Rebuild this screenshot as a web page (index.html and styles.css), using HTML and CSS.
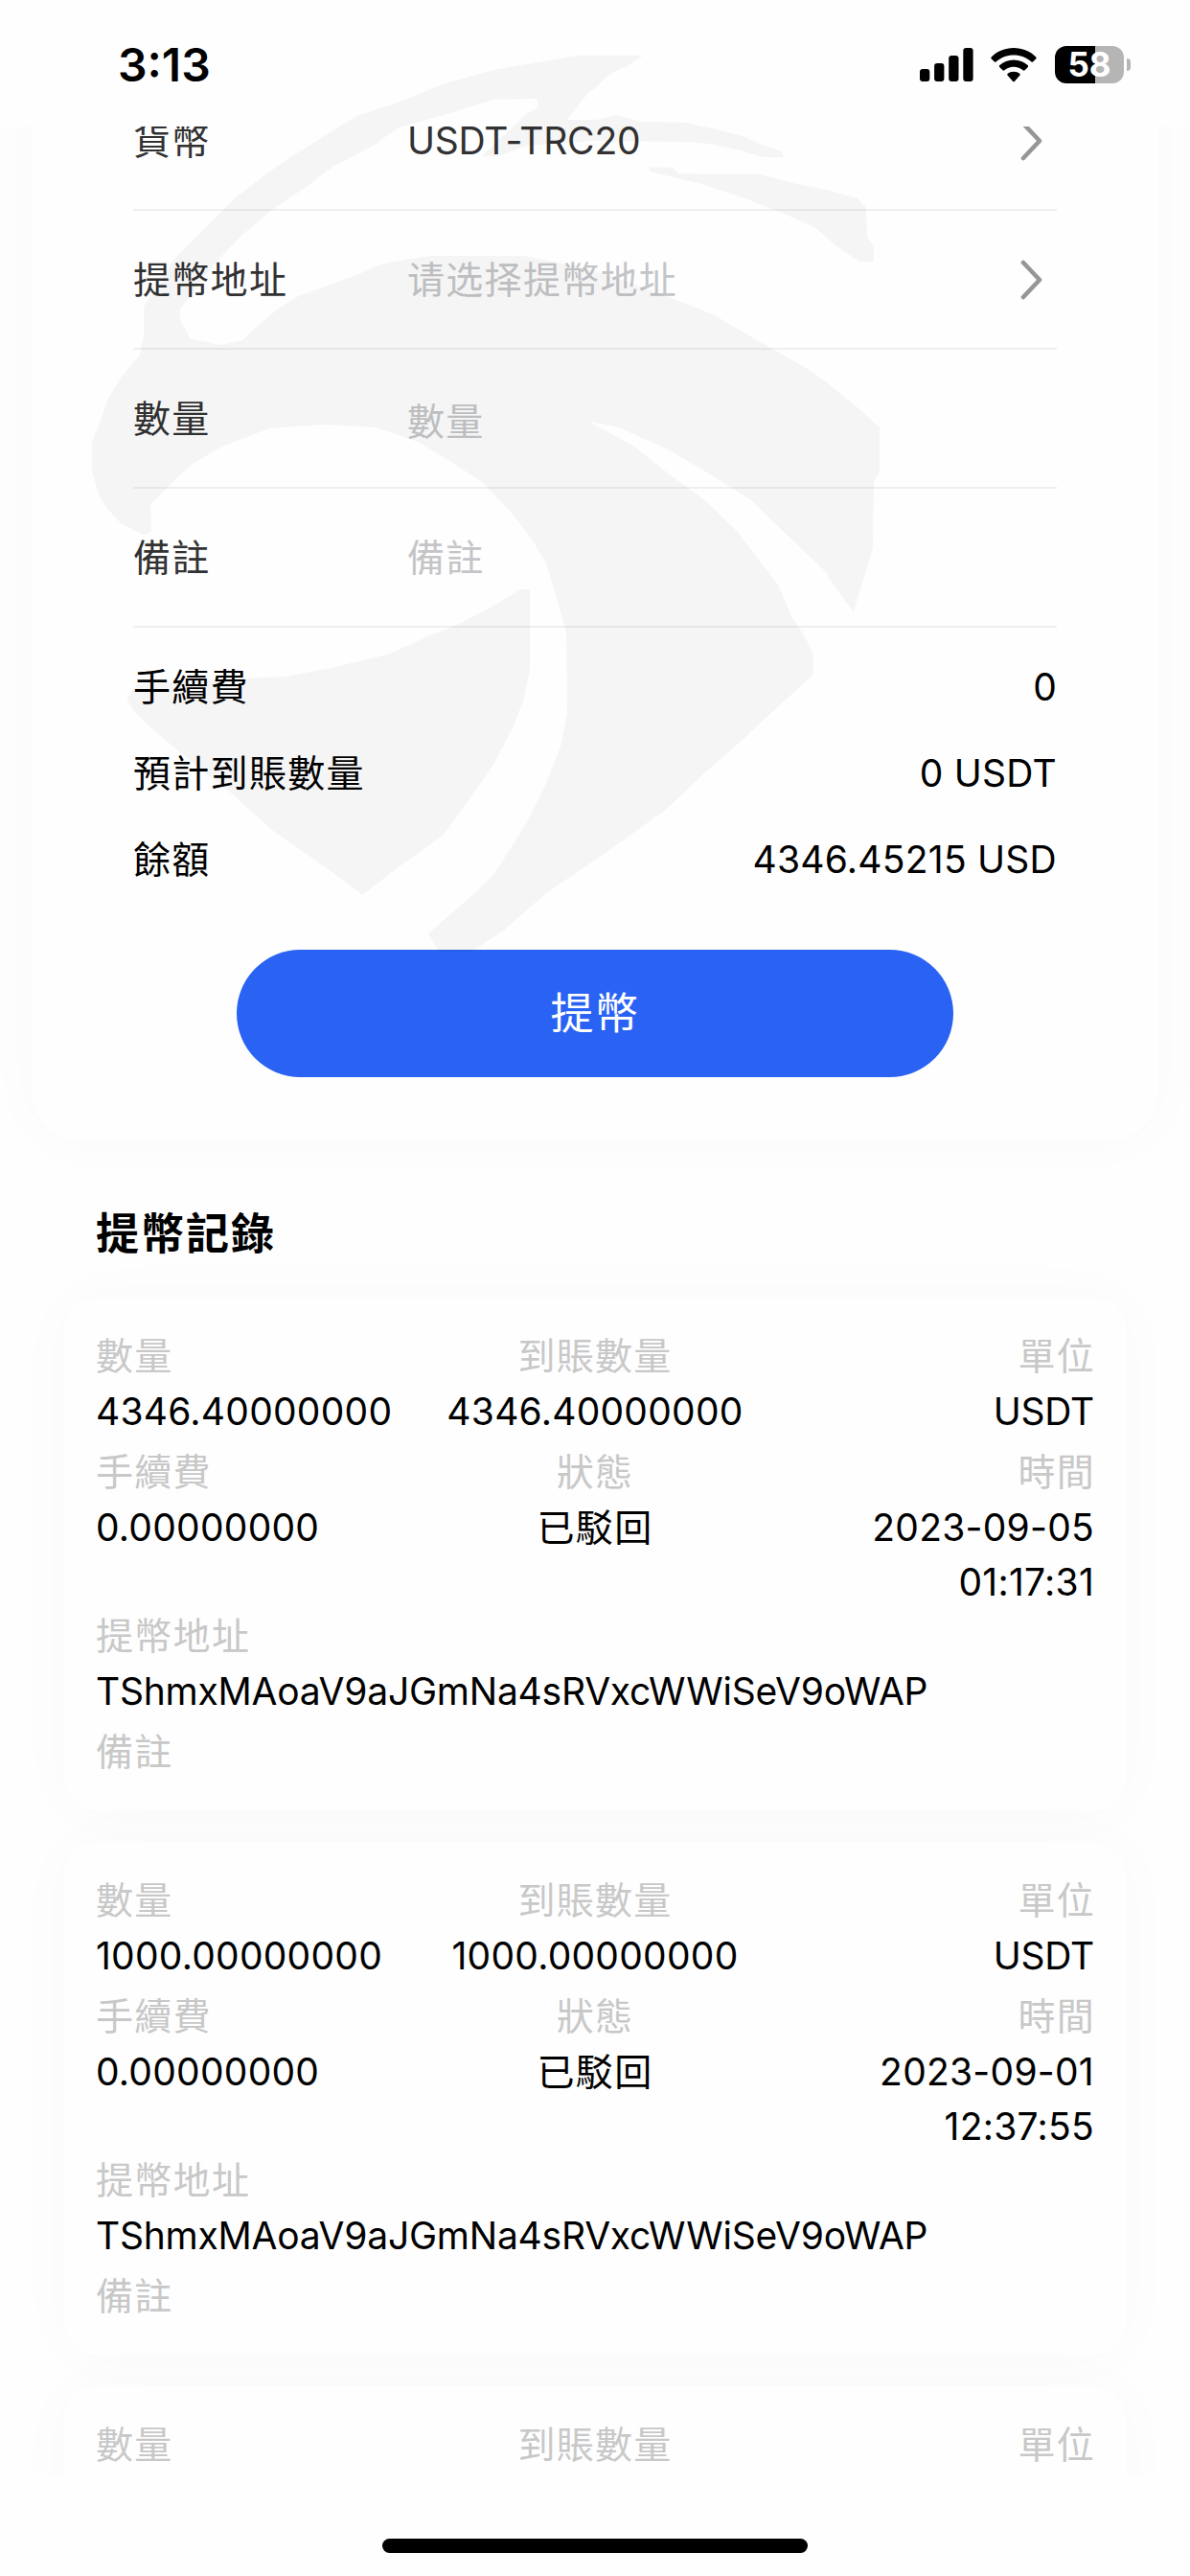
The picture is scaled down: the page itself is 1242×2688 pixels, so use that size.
FILE: index.html
```html
<!DOCTYPE html>
<html lang="zh-Hant">
<head>
<meta charset="utf-8">
<title>提幣</title>
<link rel="stylesheet" href="styles.css">
</head>
<body>
<div class="screen">
  <header class="status-bar">
    <span class="clock">3:13</span>
    <div class="status-icons">
      <svg class="signal" viewBox="0 0 56 35" width="56" height="35">
        <rect x="0" y="22" width="10.3" height="13" rx="3"/>
        <rect x="15.1" y="16" width="10.3" height="19" rx="3"/>
        <rect x="30.2" y="8" width="10.3" height="27" rx="3"/>
        <rect x="45.3" y="0" width="10.3" height="35" rx="3"/>
      </svg>
      <svg class="wifi" viewBox="0 0 48 36" width="48" height="36">
        <path d="M24 0C33 0 41.200 3.500 47 9.200C47.800 10 47.800 10.700 47.200 11.400L44.300 14.300C43.600 15 42.900 15 42.200 14.300C37.300 9.700 31 7.400 24 7.400S10.700 9.700 5.800 14.300C5.100 15 4.400 15 3.700 14.300L.8 11.400C.2 10.700.2 10 1 9.200C6.800 3.500 15 0 24 0Z"/>
        <path d="M24 12.500C29.800 12.500 34.700 14.600 38.600 18.100C39.300 18.800 39.300 19.500 38.600 20.200L35.600 23.200C34.900 23.900 34.300 23.800 33.600 23.200C30.900 21 27.700 19.800 24 19.800S17.100 21 14.400 23.200C13.700 23.800 13.100 23.900 12.400 23.200L9.400 20.200C8.700 19.500 8.700 18.800 9.400 18.100C13.300 14.600 18.200 12.500 24 12.500Z"/>
        <path d="M24 24.800C26.700 24.800 28.700 25.600 30.200 26.800C30.900 27.400 30.900 28.100 30.300 28.700L25 34.700C24.300 35.500 23.700 35.500 23 34.700L17.700 28.700C17.100 28.100 17.100 27.400 17.800 26.800C19.300 25.600 21.300 24.800 24 24.800Z"/>
      </svg>
      <div class="battery"><span class="battery-level">58</span><span class="battery-cap"></span></div>
    </div>
  </header>

  <main class="content">
    <section class="form-card">
      <div class="field">
        <span class="field-label">貨幣</span>
        <span class="field-value latin">USDT-TRC20</span>
        <svg class="chevron" viewBox="0 0 24 42" width="24" height="42"><path d="M3 3L20 21L3 39"/></svg>
      </div>
      <div class="field">
        <span class="field-label">提幣地址</span>
        <span class="field-value placeholder">请选择提幣地址</span>
        <svg class="chevron" viewBox="0 0 24 42" width="24" height="42"><path d="M3 3L20 21L3 39"/></svg>
      </div>
      <div class="field">
        <span class="field-label">數量</span>
        <span class="field-value placeholder lowered">數量</span>
      </div>
      <div class="field">
        <span class="field-label">備註</span>
        <span class="field-value placeholder">備註</span>
      </div>
      <div class="summary">
        <div class="summary-row"><span class="summary-label">手續費</span><span class="num">0</span></div>
        <div class="summary-row"><span class="summary-label">預計到賬數量</span><span class="num">0 USDT</span></div>
        <div class="summary-row"><span class="summary-label">餘額</span><span class="num">4346.45215 USD</span></div>
      </div>
      <button class="submit" type="button">提幣</button>
    </section>

    <h2 class="section-title">提幣記錄</h2>

    <section class="records">
      <article class="record">
        <div class="cell"><span class="label">數量</span><span class="value num">4346.40000000</span></div>
        <div class="cell center"><span class="label">到賬數量</span><span class="value num">4346.40000000</span></div>
        <div class="cell right"><span class="label">單位</span><span class="value latin">USDT</span></div>
        <div class="cell"><span class="label">手續費</span><span class="value num">0.00000000</span></div>
        <div class="cell center"><span class="label">狀態</span><span class="value">已駁回</span></div>
        <div class="cell right"><span class="label">時間</span><span class="value num">2023-09-05<br>01:17:31</span></div>
        <div class="cell wide"><span class="label">提幣地址</span><span class="value latin">TShmxMAoaV9aJGmNa4sRVxcWWiSeV9oWAP</span></div>
        <div class="cell wide"><span class="label">備註</span></div>
      </article>
      <article class="record">
        <div class="cell"><span class="label">數量</span><span class="value num">1000.00000000</span></div>
        <div class="cell center"><span class="label">到賬數量</span><span class="value num">1000.00000000</span></div>
        <div class="cell right"><span class="label">單位</span><span class="value latin">USDT</span></div>
        <div class="cell"><span class="label">手續費</span><span class="value num">0.00000000</span></div>
        <div class="cell center"><span class="label">狀態</span><span class="value">已駁回</span></div>
        <div class="cell right"><span class="label">時間</span><span class="value num">2023-09-01<br>12:37:55</span></div>
        <div class="cell wide"><span class="label">提幣地址</span><span class="value latin">TShmxMAoaV9aJGmNa4sRVxcWWiSeV9oWAP</span></div>
        <div class="cell wide"><span class="label">備註</span></div>
      </article>
      <article class="record partial">
        <div class="cell"><span class="label">數量</span></div>
        <div class="cell center"><span class="label">到賬數量</span></div>
        <div class="cell right"><span class="label">單位</span></div>
      </article>
    </section>
  </main>

  <footer class="home-area"><span class="home-indicator"></span></footer>

  <!-- Eagle emblem laid over the page -->
  <svg class="watermark" viewBox="0 0 1242 1000" width="1242" height="1000" aria-hidden="true">
    <path d="M671 58L602 58L555 66L515 73L461 88L418 106L372 121L337 143L305 163L277 182L245 207L214 238L182 270L166 297L150 320V350L146 370L127 393L113 415L104 442L96 461V492L104 519L113 532L127 547L150 558L158 555L157 526L174 509L198 486L230 467L281 447L337 443L392 446L436 461L471 482L503 503L531 532L554 561L570 588L578 614L591 660L592 744L585 779L570 817L547 863L515 913L491 936L447 974L458 993L491 994L527 970L570 932L610 905L653 875L696 844L736 806L776 771L808 741L849 704V683L840 664L827 645L812 610L792 584L768 553L736 522L700 496L661 465L633 450L615 440L645 446L697 469L736 492L784 522L820 557L860 595L881 626L891 638L903 599L911 572L912 503L918 492V446L895 425L864 400L840 383L804 363L768 342L744 328L706 313L650 292L600 277L546 267H447L400 275L372 287L341 298L309 310L289 323L269 340L253 355L230 360L198 353L188 333V323L210 293L226 273L253 245L285 218L317 197L349 173L388 153L416 133L463 120L515 104L560 103L562 112L548 119L538 130L519 147L503 163H520L550 152L621 147L712 148L740 150L772 157L796 164H818L816 158L792 150L778 143L752 136L716 128L669 127L645 120L622 125H592L600 115L613 98L621 92L637 77L653 70Z"/>
    <path d="M678 174L703 175L708 181L794 182L832 192L863 198L895 207L904 217L905 247L912 257V273H897L873 257L850 237L818 223L780 208L756 200L732 192L678 179Z"/>
    <path d="M553 615H543L515 632L475 653L447 664L404 683L345 697L297 706L246 708L143 714L132 729L139 741L158 760L190 787L238 825L285 867L345 909L378 934L416 905L463 871L491 832L515 798L535 760L547 729L553 698Z"/>
  </svg>
</div>
</body>
</html>
```
FILE: styles.css
```css
* {
  box-sizing: border-box;
}

body {
  margin: 0;
  background: #fefefe;
  color: #000;
  font-family: Inter, "Noto Sans CJK TC", "Noto Sans CJK SC", sans-serif;
  font-size: 39px;
  letter-spacing: 1.3px;
}

.latin {
  letter-spacing: -0.22px;
}

.num {
  letter-spacing: 0.25px;
}

.screen {
  position: relative;
  display: flex;
  flex-direction: column;
  width: 1242px;
  height: 2688px;
  overflow: hidden;
}

/* Status bar */
.status-bar {
  display: flex;
  flex: none;
  justify-content: space-between;
  align-items: flex-start;
  height: 132px;
  padding: 48px 62px 0 123px;
}

.clock {
  font-size: 48px;
  font-weight: 600;
  line-height: 40px;
  letter-spacing: 0;
}

.status-icons {
  display: flex;
  align-items: center;
  height: 39px;
}

.wifi {
  margin: 0 19px 0 18px;
}

.battery {
  display: flex;
  align-items: center;
  gap: 3px;
}

.battery-level {
  width: 72px;
  height: 39px;
  border-radius: 12px;
  background: linear-gradient(90deg, #000 42px, #b5b5b5 42px);
  color: #fff;
  font-size: 35px;
  font-weight: 700;
  line-height: 39px;
  letter-spacing: 0;
  text-align: center;
}

.battery-cap {
  width: 4px;
  height: 13px;
  border-radius: 0 4px 4px 0;
  background: #b5b5b5;
}

/* Scrolled content */
.content {
  flex: none;
  height: 2451px;
  overflow: hidden;
}

.form-card {
  height: 1155px;
  margin: -98px 33px 0;
  padding: 41px 106px 0;
  border-radius: 50px;
  background: #fefefe;
  box-shadow: 0 0 66px rgba(0, 0, 0, 0.025);
}

.field {
  display: flex;
  align-items: center;
  height: 145px;
  padding-right: 14px;
  border-bottom: 2px solid #efefef;
  color: #323233;
}

.field-label {
  width: 286px;
  padding-bottom: 6px;
}

.field-value {
  flex: 1;
}

.placeholder {
  padding-bottom: 5px;
  color: #c4c5c8;
}

.lowered {
  padding-bottom: 0;
}

.chevron path {
  fill: none;
  stroke: #969696;
  stroke-width: 4.6;
  stroke-linecap: round;
  stroke-linejoin: round;
}

.summary {
  padding-top: 16px;
}

.summary-row {
  display: flex;
  justify-content: space-between;
  align-items: center;
  height: 90px;
}

.summary-label {
  padding-bottom: 4px;
}

.submit {
  display: block;
  width: 748px;
  height: 133px;
  margin: 50px auto 0;
  padding: 0 0 6px;
  border: 0;
  border-radius: 67px;
  background: #2a63f3;
  color: #fff;
  font: inherit;
  font-size: 45px;
  letter-spacing: 1.5px;
}

.section-title {
  margin: 65px 0 32px 100px;
  font-size: 45px;
  font-weight: 700;
  line-height: 68px;
  letter-spacing: 2px;
}

/* Withdrawal history */
.records {
  display: flex;
  flex-direction: column;
  gap: 33px;
  padding: 0 67px;
}

.record {
  display: grid;
  grid-template-columns: repeat(3, 1fr);
  flex: none;
  padding: 33px 33px 32px;
  border-radius: 33px;
  background: #fefefe;
  box-shadow: 0 0 66px rgba(0, 0, 0, 0.025);
  line-height: 57px;
}

.partial {
  min-height: 534px;
  align-content: start;
}

.cell {
  display: flex;
  flex-direction: column;
}

.center {
  text-align: center;
}

.right {
  text-align: right;
}

.right .label {
  margin-right: -1px;
}

.wide {
  grid-column: 1 / -1;
}

.label {
  margin: -1px 0 1px;
  color: #c8c8c8;
}

.value {
  min-height: 64px;
}

/* Home indicator */
.home-area {
  display: flex;
  flex: 1;
  justify-content: center;
  align-items: flex-end;
  padding-bottom: 24px;
}

.home-indicator {
  width: 444px;
  height: 15px;
  border-radius: 8px;
  background: #000;
}

.watermark {
  position: absolute;
  top: 0;
  left: 0;
  fill: rgba(0, 0, 0, 0.037);
  pointer-events: none;
}
```
